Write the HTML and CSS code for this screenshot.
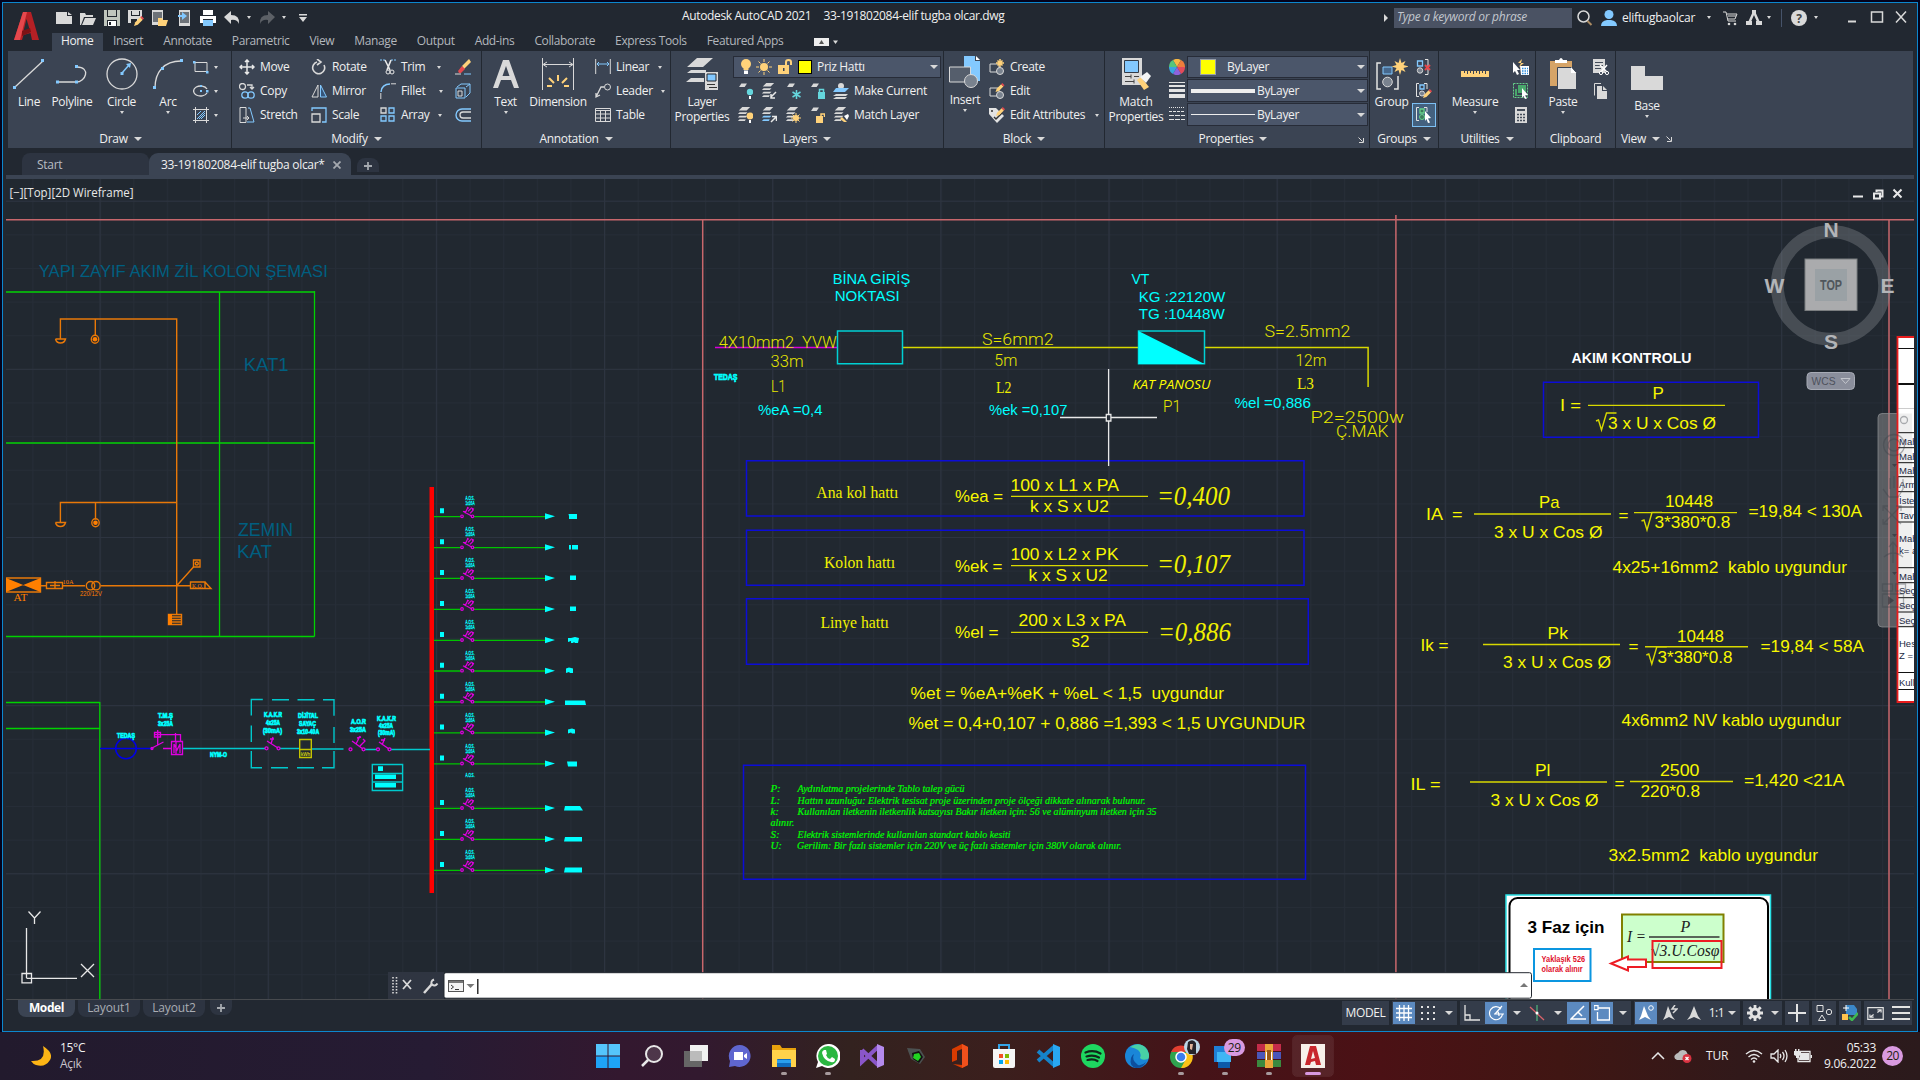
FILE: index.html
```html
<!DOCTYPE html>
<html lang="tr">
<head>
<meta charset="utf-8">
<title>Autodesk AutoCAD 2021</title>
<link rel="stylesheet" href="styles.css">
</head>
<body>
<svg class="defs" aria-hidden="true">
  <symbol id="layer" viewBox="0 0 16 16"><path fill="#d9d9d9" d="M5 1h10l-4 6H1z"/></symbol>
  <symbol id="stack" viewBox="0 0 16 16"><path fill="#d9d9d9" d="M6 0h9l-4 4H2zM3 6h9l-2 2H1zM3 10h9l-2 2H1zM3 14h7l-1 2H1z"/></symbol>
  <symbol id="bluestack" viewBox="0 0 16 16"><path fill="#d9d9d9" d="M6 0h8l-4 4H2zM3 6h9l-2 2H1z"/><path fill="#83c9ff" d="M3 10h9l-2 2H1zM3 14h7l-1 2H1z"/></symbol>
  <symbol id="pencil" viewBox="0 0 8 8"><path fill="#ffd27a" d="M0 8l1-3 4-4 2 2-4 4z"/><path fill="#e5484d" d="M5 1l1-1 2 2-1 1z"/></symbol>
  <symbol id="launch" viewBox="0 0 6 6"><path fill="none" stroke="#d9d9d9" d="M.5.5l4 4M5.500 1v4.500h-4.500"/></symbol>
</svg>
<div class="window">
  <header class="head">
    <svg class="logo" viewBox="0 0 26 30"><path fill="#b52025" d="M9 1h8l8 28h-7l-1.500-7-7 2L8 29H0z"/><path fill="#e5484d" d="M9 1h4L6 29H0z"/><path fill="#262b33" d="M12.500 8l3 10-6 2z"/><path fill="#7d1215" d="M8 20l8-3 1 4-9 4z"/></svg>
    <div class="titlebar">
      <div class="quick">
        <svg class="i16" viewBox="0 0 16 16"><path fill="#d9d9d9" d="M0 2h11v4h5v8H0zM12 2l4 3h-4z"/></svg>
        <svg class="i16" viewBox="0 0 16 16"><path fill="#d9d9d9" d="M0 3h5l1 2h7v2H4L1 15H0zM5 8h11l-3 7H2z"/></svg>
        <svg class="i16" viewBox="0 0 16 16"><path fill="#bfc5bd" d="M0 0h16v16H0z"/><path fill="#20252d" d="M3 0h1v6h8V0h1v7H3zM3 10h10v6H3z"/><path fill="#fff" d="M4 11h8v5H4z"/><path fill="#20252d" d="M5 12h2v3H5z"/></svg>
        <svg class="i16" viewBox="0 0 16 16"><path fill="#d9d9d9" d="M0 0h14v8l-5 5H0z"/><path fill="#20252d" d="M3 1h1v4h7V1h1v5H3zM3 9h6v4H3z"/><use href="#pencil" x="6" y="6" width="10" height="10"/></svg>
        <svg class="i16" viewBox="0 0 16 16"><path fill="#d9d9d9" d="M0 0h11v15H0z"/><path fill="#6d7278" d="M1 2h9v10H1z"/><path fill="#ffd27a" d="M6 8h4l1 2h5l-2 6H6z"/></svg>
        <svg class="i12" viewBox="0 0 12 16"><path fill="#d9d9d9" d="M1 0h11v16H1z"/><path fill="#6d7278" d="M2 2h9v11H2z"/><path fill="#83c9ff" d="M0 5h4V2l5 4-5 4V7H0z"/></svg>
        <svg class="i16 print" viewBox="0 0 16 16"><path fill="#fff" d="M3 0h10v5H3zM0 6h16v7h-3V9H3v4H0z"/><path fill="#83c9ff" d="M3 10h10v6H3z"/></svg>
        <svg class="i16" viewBox="0 0 16 16"><path fill="#d9d9d9" d="M0 7l7-6v4q9 0 8 9-2-5-8-4v4z"/></svg>
        <i class="car c1"></i>
        <svg class="i16" viewBox="0 0 16 16"><path fill="#5c6066" d="M16 7L9 1v4Q0 5 1 14q2-5 8-4v4z"/></svg>
        <i class="car c2"></i>
        <svg class="i8 c3" viewBox="0 0 8 8"><path fill="#d9d9d9" d="M0 0h8v1.500H0zM0 3h8L4 8z"/></svg>
      </div>
      <div class="doc"><span>Autodesk AutoCAD 2021</span><span>33-191802084-elif tugba olcar.dwg</span></div>
      <div class="info">
        <svg class="tri" viewBox="0 0 4 8"><path fill="#d9d9d9" d="M0 0l4 4-4 4z"/></svg>
        <div class="search">Type a keyword or phrase</div>
        <svg class="i16 mg" viewBox="0 0 16 16"><circle cx="6.500" cy="6.500" r="5.500" fill="none" stroke="#d9d9d9" stroke-width="1.500"/><path stroke="#ab8b62" stroke-width="2" d="M10.500 11l4 4"/></svg>
        <svg class="i16 usr" viewBox="0 0 16 16"><circle cx="8" cy="4.500" r="4.500" fill="#83c9ff"/><path fill="#83c9ff" d="M0 16q0-5 6-6h4q6 1 6 6z"/></svg>
        <span class="user">eliftugbaolcar</span><i class="car k1"></i>
        <svg class="i16 crt" viewBox="0 0 16 16"><path fill="none" stroke="#d9d9d9" d="M0 2h3l2 9h8M4 4h10l-2 5H5M5 6h8"/><circle cx="6" cy="14" r="1.300" fill="#d9d9d9"/><circle cx="12" cy="14" r="1.300" fill="#d9d9d9"/></svg>
        <svg class="i16 aa" viewBox="0 0 16 16"><path fill="none" stroke="#d9d9d9" stroke-width="2.500" d="M8 2L3.500 12M8 2l4.500 10"/><path fill="#d9d9d9" d="M0 11h6v4H0zM10 11h6v4h-6zM6 0h4v4H6z"/></svg>
        <i class="car k2"></i><b class="bar"></b>
        <svg class="i16 hlp" viewBox="0 0 16 16"><circle cx="8" cy="8" r="8" fill="#d9d9d9"/><text x="8" y="12.500" text-anchor="middle" class="q">?</text></svg>
        <i class="car k3"></i>
        <svg class="win" viewBox="0 0 60 14"><path fill="none" stroke="#d9d9d9" stroke-width="2" d="M0 11.500h8"/><path fill="none" stroke="#d9d9d9" stroke-width="1.500" d="M23.500 2h11v10h-11zM48 1.500l10 11M58 1.500l-10 11"/></svg>
      </div>
    </div>
    <nav class="menu">
      <a class="on">Home</a><a>Insert</a><a>Annotate</a><a>Parametric</a><a>View</a><a>Manage</a><a>Output</a><a>Add-ins</a><a>Collaborate</a><a>Express Tools</a><a>Featured Apps</a>
      <svg class="mini" viewBox="0 0 26 8"><path fill="#eee" d="M0 0h15v8H0z"/><path fill="#555" d="M5 6l2.500-4L10 6z"/><path fill="#d9d9d9" d="M19 2.500h5L21.500 6z"/></svg>
    </nav>
  </header>

  <section class="ribbon">
    <div class="panel draw">
      <div class="body">
        <div class="big w42"><svg viewBox="0 0 32 32"><path stroke="#d9d9d9" stroke-width="1.300" d="M2 29L30 3"/><path fill="#83c9ff" d="M0 28h3v3H0zM28 1h3v3h-3z"/></svg><span>Line</span></div>
        <div class="big w44"><svg viewBox="0 0 32 32"><path fill="none" stroke="#d9d9d9" stroke-width="1.300" d="M2 24h18c10 0 15-15 1-15"/><path fill="#83c9ff" d="M0 22.500h3v3H0zM19 22.500h3v3h-3zM19 7h3v3h-3z"/></svg><span>Polyline</span></div>
        <div class="big w55"><svg viewBox="0 0 32 32"><circle cx="16" cy="16" r="15" fill="none" stroke="#d9d9d9" stroke-width="1.300"/><path stroke="#83c9ff" stroke-width="1.500" d="M16 15l7-8"/><path fill="#83c9ff" d="M14.500 14h3v3h-3zM25 5l-5 1 4 4z"/></svg><span>Circle</span><i class="car"></i></div>
        <div class="big w38"><svg viewBox="0 0 32 32"><path fill="none" stroke="#d9d9d9" stroke-width="1.300" d="M3 30C3 14 12 3 29 3"/><path fill="#83c9ff" d="M1 28h3v3H1zM28 1h3v3h-3zM9 9h3v3H9z"/></svg><span>Arc</span><i class="car"></i></div>
        <div class="col dcol">
          <div class="t"><svg class="i16" viewBox="0 0 16 16"><path fill="none" stroke="#d9d9d9" d="M2 3.500h12v9H2z"/><path fill="#83c9ff" d="M0 2h2.500v2.500H0zM13 12h2.500v2.500H13z"/></svg><i class="car"></i></div>
          <div class="t"><svg class="i16" viewBox="0 0 16 16"><path fill="none" stroke="#d9d9d9" stroke-width="1.300" d="M14 6a7 5 0 1 0 0 4"/><path fill="#83c9ff" d="M7 7h2v2H7zM13 7h2.500v2.500H13zM7 2h2v2H7z"/></svg><i class="car"></i></div>
          <div class="t"><svg class="i16" viewBox="0 0 16 16"><path fill="none" stroke="#d9d9d9" d="M0 2.500h16M0 13.500h16M2.500 0v16M13.500 0v16"/><path stroke="#83c9ff" d="M4 8l4-4M4 12l8-8M8 12l4-4M6 12l6-6"/></svg><i class="car"></i></div>
        </div>
      </div>
      <div class="name">Draw<i class="dn"></i></div>
    </div>
    <div class="panel modify">
      <div class="body">
        <div class="col m1">
          <div class="t"><svg class="i16" viewBox="0 0 16 16"><path fill="none" stroke="#e8e8e8" stroke-width="1.500" d="M8 1v14M1 8h14M6 3l2-2 2 2M6 13l2 2 2-2M3 6L1 8l2 2M13 6l2 2-2 2"/></svg>Move</div>
          <div class="t"><svg class="i16" viewBox="0 0 16 16"><g fill="none" stroke-width="1.300"><circle cx="3.500" cy="3.500" r="3" stroke="#d9d9d9"/><path stroke="#d9d9d9" d="M8 2h5v3M11 4l2 2 2-2"/><circle cx="6" cy="12" r="3.200" stroke="#83c9ff"/><circle cx="12" cy="12" r="3.200" stroke="#83c9ff"/></g></svg>Copy</div>
          <div class="t"><svg class="i16" viewBox="0 0 16 16"><path fill="none" stroke="#d9d9d9" d="M1 .5h6v15H1zM4 11h6M8 9l2 2-2 2"/><path fill="none" stroke="#83c9ff" d="M9 1h2l4 14H8"/></svg>Stretch</div>
        </div>
        <div class="col m2">
          <div class="t"><svg class="i16" viewBox="0 0 16 16"><path fill="none" stroke="#d9d9d9" stroke-width="1.600" d="M6 3a6 6 0 1 0 7 3M6 0l4 3-4 3"/></svg>Rotate</div>
          <div class="t"><svg class="i16" viewBox="0 0 16 16"><path fill="none" stroke="#d9d9d9" d="M7 2v12H1z"/><path fill="#35557a" stroke="#83c9ff" d="M9.500 2v12h6z"/></svg>Mirror</div>
          <div class="t"><svg class="i16" viewBox="0 0 16 16"><path fill="none" stroke="#83c9ff" stroke-width="1.300" d="M1 4V1h14v14h-4"/><path fill="none" stroke="#d9d9d9" stroke-width="1.300" d="M1 7h8v8H1z"/></svg>Scale</div>
        </div>
        <div class="col m3">
          <div class="t"><svg class="i16" viewBox="0 0 16 16"><path stroke="#83c9ff" stroke-dasharray="2 1" d="M0 1h6M11 1h5"/><path fill="none" stroke="#e8e8e8" stroke-width="1.600" d="M5 1l5 10M11 1L7 11"/><circle cx="12" cy="13" r="2" fill="none" stroke="#e8e8e8"/><circle cx="8" cy="13" r="2" fill="none" stroke="#e8e8e8"/></svg>Trim<i class="car tr"></i></div>
          <div class="t"><svg class="i16" viewBox="0 0 16 16"><path fill="none" stroke="#83c9ff" stroke-width="1.500" d="M1 9c0-5 4-8 9-8"/><path stroke="#d9d9d9" d="M11 .8h5M.8 10v6"/></svg>Fillet<i class="car fi"></i></div>
          <div class="t"><svg class="i16" viewBox="0 0 16 16"><g fill="none" stroke-width="1.300"><path stroke="#d9d9d9" d="M1 1h5v5H1z"/><path stroke="#83c9ff" d="M9 1h5v5H9zM1 9h5v5H1zM9 9h5v5H9z"/></g></svg>Array<i class="car ar2"></i></div>
        </div>
        <div class="col m4">
          <div class="t"><svg class="i16" viewBox="0 0 16 16"><path fill="#ffd27a" d="M7 7l7-7 2 3-7 7z"/><path fill="#e5484d" d="M3 12l4-5 3 3-4 4H4z"/><path stroke="#83c9ff" d="M9 15h7"/><path stroke="#d9d9d9" d="M0 15h6"/></svg></div>
          <div class="t"><svg class="i16" viewBox="0 0 16 16"><path fill="none" stroke="#d9d9d9" d="M3 8h4v5H3z"/><path fill="none" stroke="#83c9ff" d="M1 5h9v10H1zM2 4l4-3h9v9l-4 4M11 4l4-3"/></svg></div>
          <div class="t"><svg class="i16" viewBox="0 0 16 16"><path fill="none" stroke="#83c9ff" stroke-width="1.400" d="M16 2H7a6 6 0 0 0 0 12h9"/><path fill="none" stroke="#d9d9d9" stroke-width="1.300" d="M16 5H8a3 3 0 0 0 0 6h8"/></svg></div>
        </div>
      </div>
      <div class="name">Modify<i class="dn"></i></div>
    </div>
    <div class="panel anno">
      <div class="body">
        <div class="big w47"><svg viewBox="0 0 32 32"><path fill="#d9d9d9" fill-rule="evenodd" d="M13 2h6l10 28h-5l-3-8H11l-3 8H3zM12.500 18h7L16 8z"/></svg><span>Text</span><i class="car"></i></div>
        <div class="big w58"><svg viewBox="0 0 32 32"><path fill="none" stroke="#d9d9d9" d="M.5 0v32M31.500 0v32M2 6.500h28M5 4L1 6.500 5 9M27 4l4 2.500L27 9"/><path stroke="#ffd27a" stroke-width="2" d="M5 28h5M7 20l5 5M16 17v6M25 20l-5 5M27 28h-5"/></svg><span>Dimension</span></div>
        <div class="col an1">
          <div class="t"><svg class="i16" viewBox="0 0 16 16"><path fill="none" stroke="#d9d9d9" d="M.7 0v15M15.300 0v15"/><path fill="none" stroke="#83c9ff" d="M2 5h12M4 3L2 5l2 2M12 3l2 2-2 2"/></svg>Linear<i class="car li"></i></div>
          <div class="t"><svg class="i16" viewBox="0 0 16 16"><circle cx="12.500" cy="4" r="3" fill="none" stroke="#d9d9d9"/><path fill="none" stroke="#d9d9d9" stroke-width="1.300" d="M9 4H6L1 14M1 10v4l4-2"/></svg>Leader<i class="car le"></i></div>
          <div class="t"><svg class="i16" viewBox="0 0 16 16"><path fill="none" stroke="#d9d9d9" d="M.5 1.500h15v13H.5zM.5 3.500h15M.5 7h15M.5 11h15M5.500 4v11M10.500 4v11"/></svg>Table</div>
        </div>
      </div>
      <div class="name">Annotation<i class="dn"></i></div>
    </div>
    <div class="panel layers">
      <div class="body">
        <div class="big w63"><svg viewBox="0 0 32 32"><path fill="#d9d9d9" d="M11 0h16L17 9H1zM5 12h15v3H1zM5 20h13v4H0zM19 14h13v18H19z"/><path fill="#83c9ff" stroke="#20252d" d="M21 16h9v7h-9z"/><path stroke="#333" d="M21 26.500h8M23 29.500h8"/></svg><span>Layer<br>Properties</span></div>
        <div class="lcol">
          <div class="combo wide"><svg class="i16" viewBox="0 0 16 16"><circle cx="6" cy="5" r="5" fill="#ffd27a"/><path fill="#ffd27a" d="M3.500 8h5v3h-5z"/><path fill="#fff" d="M4 11.500h4V15H4z"/></svg><svg class="i16" viewBox="0 0 16 16"><circle cx="8" cy="8" r="4" fill="#ffd27a"/><path stroke="#ffd27a" d="M8 0v3M8 13v3M0 8h3M13 8h3M2.500 2.500l2 2M11.500 11.500l2 2M2.500 13.500l2-2M11.500 4.500l2-2"/></svg><svg class="i16 lk" viewBox="0 0 16 16"><path fill="#ffd27a" d="M1 6h11v9H1z"/><path fill="none" stroke="#ffd27a" stroke-width="2" d="M9 6V3q0-2 2.500-2T14 3v3"/><path fill="#3b4453" d="M6 9h1.500v3H6z"/></svg><b class="sw"></b><span>Priz Hattı</span><i class="dn"></i></div>
          <div class="t icons"><svg class="i16" viewBox="0 0 16 16"><use href="#layer" width="12" height="9"/><circle cx="13" cy="9" r="3.200" fill="#65d6dd"/><path fill="#fff" d="M12 13h2v3h-2z"/></svg><svg class="i16" viewBox="0 0 16 16"><use href="#stack" width="14" height="14"/><path stroke="#e8e8e8" stroke-width="1.500" d="M15 9l-5 5M10 11v4h4" fill="none"/></svg><svg class="i16" viewBox="0 0 16 16"><use href="#layer" width="12" height="9"/><path stroke="#65d6dd" stroke-width="1.500" d="M11.500 7v9M7.500 9l8 5M15.500 9l-8 5"/></svg><svg class="i16" viewBox="0 0 16 16"><use href="#layer" width="12" height="9"/><path fill="#65d6dd" d="M9 9h7v7H9z"/><path fill="none" stroke="#65d6dd" stroke-width="1.500" d="M10.500 9V6.500h4V9"/></svg><svg class="i16" viewBox="0 0 16 16"><circle cx="8" cy="3" r="3" fill="#d9d9d9"/><path fill="#83c9ff" d="M3 5h13l-4 4H0z"/><path fill="#d9d9d9" d="M3 11h12l-2 2H0zM3 14h11l-2 2H0z"/></svg><span>Make Current</span></div>
          <div class="t icons"><svg class="i16" viewBox="0 0 16 16"><use href="#stack" width="14" height="14"/><circle cx="13" cy="9" r="3.400" fill="#ffd27a"/><path fill="#fff" d="M12 13h2v3h-2z"/></svg><svg class="i16" viewBox="0 0 16 16"><use href="#bluestack" width="14" height="14"/><path stroke="#e8e8e8" stroke-width="1.500" d="M10 15l5-5M11 9.500h4.500V14" fill="none"/></svg><svg class="i16" viewBox="0 0 16 16"><use href="#stack" width="14" height="14"/><circle cx="11" cy="11" r="3" fill="#ffd27a"/><path stroke="#ffd27a" d="M11 6v10M6 11h10M7.500 7.500l7 7M14.500 7.500l-7 7"/></svg><svg class="i16" viewBox="0 0 16 16"><use href="#layer" width="12" height="9"/><path fill="#ffd27a" d="M7 9h7v7H7z"/><path fill="none" stroke="#ffd27a" stroke-width="1.500" d="M12 9V7h3.500v3"/></svg><svg class="i16" viewBox="0 0 16 16"><use href="#stack" width="14" height="14"/><path fill="#ffd27a" d="M9 10l5 5h-3l-4-3z"/><path fill="#fff" d="M11 9l4-2 1 2-2 4z"/></svg><span>Match Layer</span></div>
        </div>
      </div>
      <div class="name">Layers<i class="dn"></i></div>
    </div>
    <div class="panel block">
      <div class="body">
        <div class="big w43 ins"><svg viewBox="0 0 32 32"><path fill="#83c9ff" d="M15 0h11v5h5v20H15z"/><path fill="#fff" d="M27 0l4 4h-4z"/><path fill="#555e6c" stroke="#d9d9d9" d="M.5 11h21v15H.5z"/><circle cx="22" cy="25" r="6.500" fill="#79828e" stroke="#d9d9d9"/></svg><span>Insert</span><i class="car"></i></div>
        <div class="col bl">
          <div class="t"><svg class="i16" viewBox="0 0 16 16"><path fill="none" stroke="#d9d9d9" d="M1 5h9v8H1z"/><circle cx="11" cy="12" r="3.500" fill="#79828e" stroke="#d9d9d9"/><path stroke="#ffd27a" stroke-width="1.500" d="M11 0v8M7 4h8M8.500 1.500l5 5M13.500 1.500l-5 5"/></svg>Create</div>
          <div class="t"><svg class="i16" viewBox="0 0 16 16"><path fill="none" stroke="#d9d9d9" d="M1 5h9v8H1z"/><circle cx="11" cy="12" r="3.500" fill="#79828e" stroke="#d9d9d9"/><use href="#pencil" x="6" y="0" width="10" height="9"/></svg>Edit</div>
          <div class="t"><svg class="i16" viewBox="0 0 16 16"><path fill="#e3e3e3" d="M0 1h7l8 8-7 7-8-9z"/><circle cx="3" cy="4" r="1" fill="#333"/><path stroke="#333" stroke-width="1.500" d="M5 10l2 2 6-6" fill="none"/><use href="#pencil" x="7" y="0" width="9" height="9"/></svg>Edit Attributes<i class="car ea"></i></div>
        </div>
      </div>
      <div class="name">Block<i class="dn"></i></div>
    </div>
    <div class="panel props">
      <div class="body">
        <div class="big w62"><svg viewBox="0 0 32 32"><path fill="#d9d9d9" d="M2 0h20v27H2z"/><path fill="#83c9ff" stroke="#333b47" d="M4.500 2.500h14v12h-14z"/><path stroke="#444" d="M5 18.500h6M5 23.500h9M11 16.500v4M14 21.500v4M14 18.500h5"/><path fill="#ffd27a" d="M17 22l4-3 8 10-5 3z"/><path fill="#f4f4f4" d="M20 19l7-5 4 4-5 7z"/></svg><span>Match<br>Properties</span></div>
        <div class="col pi">
          <div class="t"><svg class="i16" viewBox="0 0 16 16"><path fill="#f6b844" d="M8 8L4 1a8 8 0 0 1 8 0z"/><path fill="#ef7d3c" d="M8 8l4-7a8 8 0 0 1 4 7z"/><path fill="#e24b5b" d="M8 8h8a8 8 0 0 1-4 7z"/><path fill="#8e63dd" d="M8 8l4 7a8 8 0 0 1-8 0z"/><path fill="#3aa4e0" d="M8 8l-4 7a8 8 0 0 1-4-7z"/><path fill="#55c67b" d="M8 8H0a8 8 0 0 1 4-7z"/></svg></div>
          <div class="t"><svg class="i16" viewBox="0 0 16 16"><path fill="#e3e3e3" d="M0 0h16v1H0zM0 3h16v2H0zM0 7h16v3H0zM0 12h16v4H0z"/></svg></div>
          <div class="t"><svg class="i16" viewBox="0 0 16 16"><path stroke="#e3e3e3" stroke-dasharray="1 1" d="M0 1.500h16"/><path stroke="#e3e3e3" stroke-dasharray="3 1" d="M0 5.500h16"/><path stroke="#e3e3e3" stroke-dasharray="5 1" d="M0 9.500h16M0 13.500h16"/></svg></div>
        </div>
        <div class="pcombos">
          <div class="combo"><b class="sw y"></b><span>ByLayer</span><i class="dn"></i></div>
          <div class="combo"><b class="ln thick"></b><span>ByLayer</span><i class="dn"></i></div>
          <div class="combo"><b class="ln"></b><span>ByLayer</span><i class="dn"></i></div>
        </div>
      </div>
      <div class="name">Properties<i class="dn"></i><svg class="la" viewBox="0 0 6 6"><use href="#launch"/></svg></div>
    </div>
    <div class="panel groups">
      <div class="body">
        <div class="big w42g"><svg viewBox="0 0 32 32"><path fill="none" stroke="#e3e3e3" stroke-width="1.500" d="M5 5H1v26h4M18 31h4V18"/><path fill="#46688d" stroke="#83c9ff" d="M7 9h9v7H7z"/><circle cx="11.500" cy="24" r="4.800" fill="#79828e" stroke="#d9d9d9"/><path fill="#ffd27a" d="M24 0l1.500 5 4-2-2 4 5 1.500-5 1.500 2 4-4-2-1.500 5-1.500-5-4 2 2-4-5-1.500 5-1.500-2-4 4 2z"/></svg><span>Group</span></div>
        <div class="col gi">
          <div class="t"><svg class="i16" viewBox="0 0 16 16"><path fill="none" stroke="#e3e3e3" d="M9 .5h3v15H9"/><path fill="none" stroke="#83c9ff" stroke-width="1.300" d="M1.500 2h5v5h-5z"/><circle cx="4" cy="11.500" r="2.700" fill="#79828e" stroke="#d9d9d9"/><path stroke="#e5484d" stroke-width="2" d="M9 6l5 5M14 6l-5 5"/></svg></div>
          <div class="t"><svg class="i16" viewBox="0 0 16 16"><path fill="none" stroke="#e3e3e3" d="M3 .5H.5v13H3M8 .5h3V6"/><path fill="none" stroke="#83c9ff" stroke-width="1.300" d="M4 2h4v4H4z"/><circle cx="6" cy="10.500" r="2.500" fill="#79828e" stroke="#d9d9d9"/><use href="#pencil" x="7" y="6" width="9" height="9"/></svg></div>
          <div class="t hot"><svg class="i16" viewBox="0 0 16 16"><path fill="none" stroke="#e3e3e3" d="M3 .5H.5v13H3M8 .5h3V5"/><path fill="#3c7a5c" stroke="#67d18a" stroke-width="1.300" d="M4 2h4v4H4z"/><circle cx="6" cy="10" r="2.500" fill="#3c7a5c" stroke="#67d18a"/><path fill="#fff" d="M9 4l6 7-3 .5 2 4-2 .5-1.500-4L9 14z"/></svg></div>
        </div>
      </div>
      <div class="name">Groups<i class="dn"></i></div>
    </div>
    <div class="panel utils">
      <div class="body">
        <div class="big w72"><svg viewBox="0 0 32 32"><path fill="#ffd27a" d="M2 13h28v6H2z"/><path stroke="#3b4453" d="M5.500 13v2M8.500 13v3M11.500 13v2M14.500 13v3M17.500 13v2M20.500 13v3M23.500 13v2M26.500 13v3"/></svg><span>Measure</span><i class="car"></i></div>
        <div class="col uc">
          <div class="t"><svg class="i16" viewBox="0 0 16 16"><path fill="#fff" d="M0 3l7 8H4l2 4-2 1-2-4-2 2z"/><path fill="#fff" d="M7 7h9v9H8z"/><path stroke="#2c8cdc" stroke-width="1.500" stroke-dasharray="1.500 1" d="M9 9.500h6M9 12h6M9 14.500h6"/><path fill="#ffd27a" d="M9 0L5 4h3L6 8l5-4H8z"/></svg></div>
          <div class="t"><svg class="i16" viewBox="0 0 16 16"><path fill="none" stroke="#67d18a" stroke-dasharray="2 1" d="M.5.500h14v14H.5z"/><path fill="#49a86c" d="M2 6h2v6h6v1H2zM5 2h8v8H5z"/><path fill="#fff" d="M9 5l6 7-3 .5 2 3-2 .5-1.500-3L9 15z"/></svg></div>
          <div class="t"><svg class="i16" viewBox="0 0 16 16"><path fill="#d9d9d9" d="M2 0h12v16H2z"/><path fill="#434c59" d="M4 2h8v2H4z"/><path stroke="#434c59" stroke-width="1.500" stroke-dasharray="2 1" d="M4 7.500h8M4 10.500h8M4 13.500h8"/></svg></div>
        </div>
      </div>
      <div class="name">Utilities<i class="dn"></i></div>
    </div>
    <div class="panel clip">
      <div class="body">
        <div class="big w54"><svg viewBox="0 0 32 32"><path fill="#d6a467" d="M3 3h22v25H3z"/><path fill="#fff" d="M8 5V2h4q2-4 4 0h4v3z"/><path fill="#d9d9d9" stroke="#3b4453" d="M10.500 9.500h14l5 5v17h-19z"/><path fill="#fff" d="M24 9l5 6h-5z"/></svg><span>Paste</span><i class="car"></i></div>
        <div class="col ci">
          <div class="t"><svg class="i16" viewBox="0 0 16 16"><path fill="#d9d9d9" d="M0 0h12v14H0z"/><path stroke="#434c59" d="M2 3.500h8M2 6.500h8M2 9.500h6"/><path stroke="#fff" stroke-width="1.400" d="M7 6l7 7M14 6l-6 7"/><circle cx="8" cy="14" r="1.600" fill="#3b4453" stroke="#fff"/><circle cx="14" cy="14" r="1.600" fill="#3b4453" stroke="#fff"/></svg></div>
          <div class="t"><svg class="i16" viewBox="0 0 16 16"><path fill="none" stroke="#d9d9d9" d="M1.500.5H8M1.500.5v12"/><path fill="#d9d9d9" d="M4 3h6l4 4v9H4z"/><path fill="#3b4453" d="M9 3v5h5V7h-4V3z"/></svg></div>
        </div>
      </div>
      <div class="name">Clipboard</div>
    </div>
    <div class="panel view">
      <div class="body">
        <div class="big w62 base"><svg viewBox="0 0 32 32"><path fill="#d9d9d9" d="M0 4h14v10h18v14H0z"/></svg><span>Base</span><i class="car"></i></div>
      </div>
      <div class="name">View<i class="dn"></i><svg class="la v" viewBox="0 0 6 6"><use href="#launch"/></svg></div>
    </div>
  </section>

  <div class="files">
    <div class="ft start">Start</div>
    <div class="ft cur">33-191802084-elif tugba olcar*<svg viewBox="0 0 8 8"><path stroke="#a5a9af" stroke-width="1.800" d="M.5.5l7 7M7.500.5l-7 7"/></svg></div>
    <div class="ft add"><svg viewBox="0 0 8 8"><path stroke="#a5a9af" stroke-width="1.800" d="M0 4h8M4 0v8"/></svg></div>
  </div>

  <svg class="canvas" viewBox="6 179 1908 820">
    <defs>
      <pattern id="minor" patternUnits="userSpaceOnUse" x="99.600" y="200.700" width="33.630" height="33.630"><path d="M0 .5h34M.5 0v34" stroke="#262d37" fill="none"/></pattern>
      <pattern id="major" patternUnits="userSpaceOnUse" x="99.600" y="200.700" width="168.150" height="168.150"><path d="M0 .5h169M.5 0v169" stroke="#2d3440" stroke-width="1.200" fill="none"/></pattern>
      <g id="sw"><g fill="none" stroke="#e000e0" stroke-width="1.200"><circle cx="462" cy="0" r="1.300"/><circle cx="472.500" cy="0" r="1.300"/><path d="M463-5l9 5M465-3l3-6M467-9l2 1M464-4l2-1M470-3l3-3-1-2 2 1M468-5l3-3"/></g></g>
      <g id="branch"><path d="M434 .3h26M474 .3h71" stroke="#00c400" stroke-width="1.300"/><use href="#sw"/><path fill="#0ff" d="M545-3l10 3-10 3.300zM440-8h4v5h-4z"/><text class="tiny" x="465.500" y="-16" textLength="9" lengthAdjust="spacingAndGlyphs">A.O.S.</text><text class="tiny" x="465.500" y="-11" textLength="9" lengthAdjust="spacingAndGlyphs">1x16A</text></g>
    </defs>
    <rect x="6" y="179" width="1908" height="820" fill="#212830"/>
    <rect x="6" y="179" width="1908" height="820" fill="url(#minor)"/>
    <rect x="6" y="179" width="1908" height="820" fill="url(#major)"/>
    <text class="ui" x="9.500" y="197" textLength="124" lengthAdjust="spacingAndGlyphs">[−][Top][2D Wireframe]</text>
    <g fill="none" stroke="#e8e8e8" stroke-width="2"><path d="M1853 196.500h10M1874 193.500h6v5h-6zM1876.500 192v-1.500h6v6h-1.500"/><path d="M1893.500 189.500l8 8M1901.500 189.500l-8 8"/></g>
    <g fill="none" stroke="#c8676c" stroke-width="1.500"><path d="M6 219.700h1908M702.700 219v780M1395.900 215v784M1889 219v780"/></g>

    <!-- weak-current riser -->
    <g class="teal"><text x="38.800" y="277.300" font-size="17" textLength="289" lengthAdjust="spacingAndGlyphs">YAPI ZAYIF AKIM ZİL KOLON ŞEMASI</text><text x="243.700" y="371" font-size="18" textLength="45" lengthAdjust="spacingAndGlyphs">KAT1</text><text x="238" y="536" font-size="18" textLength="55" lengthAdjust="spacingAndGlyphs">ZEMIN</text><text x="237" y="558" font-size="18" textLength="35" lengthAdjust="spacingAndGlyphs">KAT</text></g>
    <g fill="none" stroke="#00d200"><path d="M6 292h308.500M6 443h308.500" stroke="#0aa80f" stroke-width="2"/><path d="M219.500 292v344M314.500 291v345.500M6 636.500h308.500M6 702.500h93.800M6 728.500h93.800M99.800 702v297" stroke-width="1.300"/></g>
    <g fill="none" stroke="#e87808" stroke-width="1.400"><path d="M60.400 339v-20h116.300v295M95.300 319v17M60.400 523v-20.500h116.300M95.500 502.500v17M40.500 585.700h6M63 585.700h22M101 585.700h90M176.700 585.700l17-19"/><path d="M55.500 339h10q-1 4-5 4t-5-4M55.500 522.500h10q-1 4-5 4t-5-4"/><ellipse cx="95" cy="339.300" rx="3.700" ry="4"/><ellipse cx="95.500" cy="522.700" rx="3.700" ry="4"/><path d="M6 578h34.500v14H6zM46.500 582.500h16v6h-16zM50 585.500h10M55 581v8M193.500 560h6.500v7h-6.500zM190.500 582h14.500v6.500h-14.500zM205 582l6 6.500h-6M168.500 614.500h13v10h-13zM172 617h9M172 619.500h9M172 622h9"/><circle cx="90.500" cy="585.700" r="4.200"/><circle cx="96" cy="585.700" r="4.200"/><circle cx="196.800" cy="563.500" r="1.500"/></g>
    <g fill="#ff7f00"><path d="M6 578l34.500 14v-14L6 592zM168 614h4v11h-4z"/><circle cx="95" cy="339.300" r="2.300"/><circle cx="95.500" cy="522.700" r="2.300"/></g>
    <g class="serif" fill="#ff7f00"><text x="13.500" y="601" font-size="11" textLength="14" lengthAdjust="spacingAndGlyphs">AT</text><text x="62.500" y="584" font-size="7" textLength="11" lengthAdjust="spacingAndGlyphs">10A</text><text x="80" y="595.500" font-size="7" class="sans" textLength="22" lengthAdjust="spacingAndGlyphs">220/12V</text><text x="192" y="588" font-size="6" textLength="11" lengthAdjust="spacingAndGlyphs">K.O.</text></g>

    <!-- distribution branches -->
    <use href="#branch" y="516.300"/><use href="#branch" y="547.300"/><use href="#branch" y="578"/><use href="#branch" y="609"/><use href="#branch" y="640"/><use href="#branch" y="670.700"/><use href="#branch" y="701.700"/><use href="#branch" y="732.500"/><use href="#branch" y="763.500"/><use href="#branch" y="808"/><use href="#branch" y="839"/><use href="#branch" y="870"/>
    <text class="tiny" x="465.500" y="777" textLength="9" lengthAdjust="spacingAndGlyphs">A.O.S.</text>
    <path fill="#0ff" d="M568.500 514h8.500v5h-8v-3zM569 545h2v4.500h-2zM572 545h6v4.500h-6zM570 575.500h6v4.500h-6zM570 606.500h6v4.500h-6zM568 638h3l4-1 4 1-1 5h-3l-1-1-1 1h-2v-2l-3 1zM566 668.500l3-1 4 1v4.500h-3l-1-1-3 1zM565 700.500h20l1 4.500h-21zM568 729.500l4-1 3 1v4h-3l-1-1-3 1zM567 761.500h10v5h-9zM565 806h15l3 4.500h-19zM565 837h17v4.500h-18zM565 867.500h17v5h-18z"/>
    <rect x="429.500" y="487" width="4.500" height="406" fill="#f00"/>

    <!-- supply line -->
    <g fill="none" stroke="#0000e6" stroke-width="1.500"><path d="M100 748.500h52"/><circle cx="126" cy="748.500" r="10.300"/></g>
    <g fill="none" stroke="#00c8cc" stroke-width="1.400"><path d="M183 748.500h82M280 748.500h20M312 749h31.500M365 749.500h11M391 749.500h39"/><path d="M251.300 715.500v-16h11.500M272 699.700h17M297.500 699.700h17M323 699.700h11v16M334 727v16M334 751v16.800h-12M314 767.800h-17M288 767.800h-17M262 767.800h-10.700V751M251.300 742v-16.500M372.300 764.500h30.300v26h-30.300zM372 773.500h30M372 782h30"/></g>
    <g fill="none" stroke="#e000e0" stroke-width="1.300"><circle cx="152" cy="748.500" r="1"/><path d="M152 748l11.500-6M157.700 730v16M154.500 732.500h6v4.500h-6zM154.500 734.700h26v7M175.500 733v8M163 748.500h9M171.500 741.500h11v13h-11zM174 753v-9l3 6 3-6v9M176 741v13"/><circle cx="266.500" cy="748.300" r="1.500"/><circle cx="278.500" cy="748.300" r="1.500"/><path d="M267 741l11 7M271 744l2-7M270 739h4"/><circle cx="350.500" cy="749.300" r="1.500"/><circle cx="363.500" cy="749.300" r="1.500"/><path d="M352 741l11 8M356 744l4-8M357 738l4-1M360 746l5-5-2-2"/><circle cx="378" cy="749.300" r="1.500"/><circle cx="389.500" cy="749.300" r="1.500"/><path d="M379 742l10 7M382 745l3-7M381 740h4"/></g>
    <g fill="none" stroke="#c4c400" stroke-width="1.400"><path d="M299.700 739.500h11.600v18h-11.600zM299.700 749.500h11.600"/></g><text x="301" y="756" font-size="6" fill="#ff0" class="sans" textLength="9" lengthAdjust="spacingAndGlyphs">kWh</text>
    <path fill="#0ff" d="M378 766.300h5v4.700h-5zM375 774.500h21v4.500h-21zM375 783h21v4.500h-21z"/>
    <g class="lab">
      <text x="117" y="737.500" textLength="18" lengthAdjust="spacingAndGlyphs">TEDAŞ</text><text x="158" y="718" textLength="15" lengthAdjust="spacingAndGlyphs">T.M.Ş</text><text x="158" y="726" textLength="15" lengthAdjust="spacingAndGlyphs">3x25A</text><text x="210" y="757" textLength="17" lengthAdjust="spacingAndGlyphs">NYM-O</text><text x="264" y="717" textLength="18" lengthAdjust="spacingAndGlyphs">K.A.K.R</text><text x="266" y="725" textLength="14" lengthAdjust="spacingAndGlyphs">4x25A</text><text x="263" y="733" textLength="19" lengthAdjust="spacingAndGlyphs">(30mA)</text><text x="298" y="718" textLength="20" lengthAdjust="spacingAndGlyphs">DİJİTAL</text><text x="299" y="726" textLength="17" lengthAdjust="spacingAndGlyphs">SAYAÇ</text><text x="297" y="734" textLength="22" lengthAdjust="spacingAndGlyphs">3x10-40A</text><text x="351" y="724" textLength="15" lengthAdjust="spacingAndGlyphs">A.O.R</text><text x="350" y="732" textLength="16" lengthAdjust="spacingAndGlyphs">3x25A</text><text x="377" y="721" textLength="19" lengthAdjust="spacingAndGlyphs">K.A.K.R</text><text x="379" y="727.500" textLength="14" lengthAdjust="spacingAndGlyphs">4x25A</text><text x="378" y="735" textLength="17" lengthAdjust="spacingAndGlyphs">(30mA)</text><text x="714" y="380" textLength="23.500" lengthAdjust="spacingAndGlyphs" font-size="9">TEDAŞ</text>
    </g>

    <!-- single-line diagram -->
    <path d="M715 347.500h122.500" stroke="#d800d8" stroke-width="1.500"/>
    <path d="M902.500 347.500h236M1204.500 347.500h163.600v39.500" stroke="#d8d800" stroke-width="1.500" fill="none"/>
    <path d="M837.500 331h65v32.700h-65zM1138.500 331h66v32.700h-66z" stroke="#00d0d4" stroke-width="1.500" fill="none"/><path d="M1138.500 331l66 33h-66z" fill="#0ff"/>
    <g class="cy">
      <text x="832.700" y="284" textLength="77.500" lengthAdjust="spacingAndGlyphs">BİNA GİRİŞ</text><text x="834.700" y="301" textLength="65" lengthAdjust="spacingAndGlyphs">NOKTASI</text><text x="1131.400" y="284" textLength="18" lengthAdjust="spacingAndGlyphs">VT</text><text x="1138.800" y="302" textLength="86.500" lengthAdjust="spacingAndGlyphs">KG :22120W</text><text x="1138.800" y="319" textLength="86" lengthAdjust="spacingAndGlyphs">TG :10448W</text><text x="758" y="415" textLength="64.500" lengthAdjust="spacingAndGlyphs">%eA =0,4</text><text x="989" y="415" textLength="78.500" lengthAdjust="spacingAndGlyphs">%ek =0,107</text><text x="1234.500" y="408" textLength="76.500" lengthAdjust="spacingAndGlyphs">%el =0,886</text>
    </g>
    <g class="cad">
      <text x="718.800" y="347.500" textLength="118" lengthAdjust="spacingAndGlyphs" xml:space="preserve">4X10mm2  YVW</text><text x="770.600" y="367.300" textLength="33" lengthAdjust="spacingAndGlyphs">33m</text><text x="771" y="391.700" textLength="15" lengthAdjust="spacingAndGlyphs">L1</text><text x="982" y="345" textLength="71.500" lengthAdjust="spacingAndGlyphs">S=6mm2</text><text x="994.300" y="366.300" textLength="23" lengthAdjust="spacingAndGlyphs">5m</text><text x="1264.500" y="337" textLength="86" lengthAdjust="spacingAndGlyphs">S=2.5mm2</text><text x="1295.500" y="366" textLength="31" lengthAdjust="spacingAndGlyphs">12m</text><text x="1163" y="411.700" font-size="17" textLength="18" lengthAdjust="spacingAndGlyphs">P1</text><text x="1310.500" y="422.700" font-size="17" textLength="93.500" lengthAdjust="spacingAndGlyphs">P2=2500w</text><text x="1336" y="437" font-size="17" textLength="52.500" lengthAdjust="spacingAndGlyphs">Ç.MAK</text>
    </g>
    <g class="serif" fill="#f0f000" font-size="16">
      <text x="995.900" y="393" textLength="15.500" lengthAdjust="spacingAndGlyphs">L2</text><text x="1297" y="388.500" textLength="17" lengthAdjust="spacingAndGlyphs">L3</text><text x="816.300" y="498" textLength="82" lengthAdjust="spacingAndGlyphs">Ana kol hattı</text><text x="824" y="568" textLength="71" lengthAdjust="spacingAndGlyphs">Kolon hattı</text><text x="820.400" y="628" textLength="68.500" lengthAdjust="spacingAndGlyphs">Linye hattı</text>
      <g font-style="italic" font-size="26.500"><text x="1157" y="504.500" textLength="73" lengthAdjust="spacingAndGlyphs">=0,400</text><text x="1157" y="573" textLength="73" lengthAdjust="spacingAndGlyphs">=0,107</text><text x="1158" y="640.500" textLength="73" lengthAdjust="spacingAndGlyphs">=0,886</text></g>
    </g>
    <text x="1132.500" y="388.700" class="kp" textLength="78" lengthAdjust="spacingAndGlyphs">KAT PANOSU</text>
    <g fill="none" stroke="#0c0cd8" stroke-width="1.500"><path d="M746.500 460.700h557.500V516H746.500zM746.500 530.300h557.500v55H746.500zM746.500 598.700h561.800v65.600H746.500zM743.500 765.300h562v114h-562zM1543.500 382.300h215v55h-215z"/></g>
    <path fill="none" stroke="#d8d800" stroke-width="1.400" d="M1011 496.400h137M1011 565.600h137M1011 632.400h137M1588 405.400h137M1474 514h137M1634 512.600h103M1483 644.500h137M1645 646.700h103M1470 782h137M1630 781.500h103M1596 421l2.500-1 3 10 5-17h10M1641.500 521l2.500-1 3 10 5-17.500h10M1646.300 655l2.500-1 3 10 5-17h10"/>
    <g class="ar">
      <text x="955" y="502" textLength="48" lengthAdjust="spacingAndGlyphs">%ea =</text><text x="955" y="572" textLength="47.500" lengthAdjust="spacingAndGlyphs">%ek =</text><text x="955" y="638" textLength="43.500" lengthAdjust="spacingAndGlyphs">%el =</text>
      <text x="1010.500" y="491.300" textLength="108.500" lengthAdjust="spacingAndGlyphs">100 x L1 x PA</text><text x="1030" y="512.300" textLength="79" lengthAdjust="spacingAndGlyphs">k x S x U2</text><text x="1010.500" y="560.300" textLength="108" lengthAdjust="spacingAndGlyphs">100 x L2 x PK</text><text x="1028.600" y="581" textLength="79" lengthAdjust="spacingAndGlyphs">k x S x U2</text><text x="1018.500" y="626.300" textLength="107.500" lengthAdjust="spacingAndGlyphs">200 x L3 x PA</text><text x="1071.500" y="647.300" textLength="18" lengthAdjust="spacingAndGlyphs">s2</text>
      <text x="910.500" y="698.500" textLength="313.500" lengthAdjust="spacingAndGlyphs" xml:space="preserve">%et = %eA+%eK + %eL &lt; 1,5  uygundur</text><text x="908.500" y="729" textLength="397" lengthAdjust="spacingAndGlyphs">%et = 0,4+0,107 + 0,886 =1,393 &lt; 1,5 UYGUNDUR</text>
      <text x="1560" y="410.700" textLength="21" lengthAdjust="spacingAndGlyphs">I =</text><text x="1652.500" y="399">P</text><text x="1608" y="428.700" textLength="108" lengthAdjust="spacingAndGlyphs">3 x U x Cos Ø</text>
      <text x="1426" y="520" textLength="36.500" lengthAdjust="spacingAndGlyphs" xml:space="preserve">IA  =</text><text x="1539" y="507.700" textLength="20.500" lengthAdjust="spacingAndGlyphs">Pa</text><text x="1494" y="537.700" textLength="108.500" lengthAdjust="spacingAndGlyphs">3 x U x Cos Ø</text><text x="1618.500" y="520.500">=</text><text x="1665" y="507.300" textLength="48" lengthAdjust="spacingAndGlyphs">10448</text><text x="1654.500" y="528.300" textLength="76" lengthAdjust="spacingAndGlyphs">3*380*0.8</text><text x="1748.500" y="517" textLength="113.500" lengthAdjust="spacingAndGlyphs">=19,84 &lt; 130A</text><text x="1612.500" y="573" textLength="234.500" lengthAdjust="spacingAndGlyphs" xml:space="preserve">4x25+16mm2  kablo uygundur</text>
      <text x="1420.500" y="651" textLength="28" lengthAdjust="spacingAndGlyphs">Ik =</text><text x="1547.500" y="639" textLength="20.500" lengthAdjust="spacingAndGlyphs">Pk</text><text x="1503" y="667.700" textLength="108" lengthAdjust="spacingAndGlyphs">3 x U x Cos Ø</text><text x="1628.500" y="652">=</text><text x="1677" y="642" textLength="47" lengthAdjust="spacingAndGlyphs">10448</text><text x="1657.500" y="662.700" textLength="75" lengthAdjust="spacingAndGlyphs">3*380*0.8</text><text x="1760.500" y="652" textLength="103.500" lengthAdjust="spacingAndGlyphs">=19,84 &lt; 58A</text><text x="1621.500" y="726" textLength="219.500" lengthAdjust="spacingAndGlyphs">4x6mm2 NV kablo uygundur</text>
      <text x="1410.500" y="790" textLength="30" lengthAdjust="spacingAndGlyphs">IL =</text><text x="1535" y="776" textLength="15.500" lengthAdjust="spacingAndGlyphs">Pl</text><text x="1490.500" y="806" textLength="108" lengthAdjust="spacingAndGlyphs">3 x U x Cos Ø</text><text x="1614.500" y="788.500">=</text><text x="1660" y="776" textLength="39.500" lengthAdjust="spacingAndGlyphs">2500</text><text x="1640.500" y="797" textLength="59.500" lengthAdjust="spacingAndGlyphs">220*0.8</text><text x="1744" y="786" textLength="100.500" lengthAdjust="spacingAndGlyphs">=1,420 &lt;21A</text><text x="1608.500" y="861" textLength="209.500" lengthAdjust="spacingAndGlyphs" xml:space="preserve">3x2.5mm2  kablo uygundur</text>
    </g>
    <g class="legend">
      <text x="770.400" y="792.300">P:</text><text x="797.600" y="792.300" textLength="167" lengthAdjust="spacingAndGlyphs">Aydınlatma projelerinde Tablo talep gücü</text>
      <text x="770.400" y="804.300">L:</text><text x="797.600" y="804.300" textLength="348" lengthAdjust="spacingAndGlyphs">Hattın uzunluğu: Elektrik tesisat proje üzerinden proje ölçeği dikkate alınarak bulunur.</text>
      <text x="770.400" y="815.300">k:</text><text x="797.600" y="815.300" textLength="359" lengthAdjust="spacingAndGlyphs">Kullanılan iletkenin iletkenlik katsayısı Bakır iletken için: 56 ve alüminyum iletken için 35</text>
      <text x="770.400" y="826.300" textLength="24" lengthAdjust="spacingAndGlyphs">alınır.</text>
      <text x="770.400" y="838.300">S:</text><text x="797.600" y="838.300" textLength="213" lengthAdjust="spacingAndGlyphs">Elektrik sistemlerinde kullanılan standart kablo kesiti</text>
      <text x="770.400" y="849.300">U:</text><text x="797" y="849.300" textLength="324.500" lengthAdjust="spacingAndGlyphs">Gerilim: Bir fazlı sistemler için 220V ve üç fazlı sistemler için 380V olarak alınır.</text>
    </g>
    <text class="akim" x="1571.500" y="363" textLength="120" lengthAdjust="spacingAndGlyphs">AKIM KONTROLU</text>

    <!-- cursor and UCS icon -->
    <g fill="none" stroke="#e8e8e8" stroke-width="1.300"><path d="M1108.600 369v45M1108.600 421v45M1060 417.500h46M1111 417.500h46M1106.300 414.500h4.600v6.500h-4.600z"/><path d="M26.500 928v50M26.500 978.300h50.500M22 973.500h9.500v9.300H22zM28.500 911.500l6 6.500v6M40.500 911.500l-6 6.500M81 964l13 13M94 964l-13 13"/></g>

    <!-- three-phase note -->
    <rect x="1506" y="895" width="264.500" height="110" fill="#fff" stroke="#28e0e4" stroke-width="1.500"/><rect x="1509.500" y="898" width="258.500" height="120" rx="8" fill="#fff" stroke="#000" stroke-width="2"/>
    <text class="faz" x="1527.500" y="932.700" textLength="77" lengthAdjust="spacingAndGlyphs">3 Faz için</text>
    <rect x="1534" y="949" width="56.500" height="32" fill="#fff" stroke="#0c96e0" stroke-width="2"/><g class="yak"><text x="1541.600" y="962.300" textLength="43.500" lengthAdjust="spacingAndGlyphs">Yaklaşık 526</text><text x="1541.600" y="971.800" textLength="41" lengthAdjust="spacingAndGlyphs">olarak alınır</text></g>
    <rect x="1622" y="914.500" width="101.500" height="47.500" fill="#ccffcc" stroke="#808000" stroke-width="2"/>
    <g class="serif" fill="#222" font-style="italic" font-size="16"><text x="1627" y="941.700" textLength="19" lengthAdjust="spacingAndGlyphs">I =</text><text x="1680.500" y="932">P</text><text x="1651" y="956" textLength="68.500" lengthAdjust="spacingAndGlyphs">√3.U.Cosφ</text></g>
    <path d="M1649 937h70.500" stroke="#333" stroke-width="1.300"/><path d="M1652.500 941h69v27h-69z" fill="none" stroke="#ed1c24" stroke-width="2"/><path d="M1646 959.500v7.500h-18v3.500l-17-7 17-7v3z" fill="#fff" stroke="#ed1c24" stroke-width="2"/>

    <!-- view cube and navigation bar -->
    <circle cx="1831" cy="285.500" r="53.700" fill="none" stroke="#878b90" stroke-opacity=".38" stroke-width="13"/>
    <rect x="1805" y="259" width="52" height="51.500" fill="#aaabad" stroke="#7b7e80"/><rect x="1815" y="269" width="32" height="32" fill="#9aa1a5"/>
    <g class="cube"><text x="1831" y="236.500">N</text><text x="1831" y="349">S</text><text x="1774.500" y="292.800">W</text><text x="1887.500" y="292.800">E</text><text x="1831" y="290" class="top" textLength="22" lengthAdjust="spacingAndGlyphs">TOP</text></g>
    <rect x="1807" y="372.500" width="47.500" height="17" rx="4" fill="#8a8e9b" stroke="#a7abb5"/><text class="wcs" x="1811.500" y="384.500" textLength="24" lengthAdjust="spacingAndGlyphs">WCS</text><path fill="none" stroke="#c3c6cc" d="M1841 378.500h9l-4.500 5z"/>
    <rect x="1878" y="413.500" width="34" height="213.500" rx="4" fill="#999" fill-opacity=".48" stroke="#909396" stroke-opacity=".7"/>

    <!-- table cut by the viewport edge -->
    <path fill="#fff" d="M1897 336.700h17v365.600h-17z"/><path fill="#999" fill-opacity=".16" d="M1897 413.500h15v213.500h-15z"/><path fill="none" stroke="#111" d="M1898 348.500h16M1898 432.700h16M1898 447.700h16M1898 462.700h16M1898 476.700h16M1898 491.700h16M1898 507h16M1898 522h16M1898 567.700h16M1898 582.700h16M1898 597.700h16M1898 612h16M1898 626.700h16M1898 672.500h16M1898 689.500h16"/><path stroke="#111" stroke-width="2" d="M1898 384h16"/><path stroke="#ccc" d="M1898 408.500h16"/><path fill="none" stroke="#e81c1c" stroke-width="1.800" d="M1914 337h-16.500v365h16.500"/>
    <g class="tab"><text x="1899" y="445">Mahal</text><text x="1899" y="460">Mahal</text><text x="1899" y="474">Mahal</text><text x="1899" y="488">Arma</text><text x="1899" y="504">İsten</text><text x="1899" y="519">Tavan</text><text x="1899" y="542">Mahal</text><text x="1899" y="554">k= a</text><text x="1899" y="580">Mahal</text><text x="1899" y="594">Seçil</text><text x="1899" y="609">Seçil</text><text x="1899" y="624">Seçil</text><text x="1899" y="647">Hesap</text><text x="1899" y="658.500">Z = A</text><text x="1899" y="686">Kulla</text></g>
    <g fill="none" stroke="#3f444a" stroke-opacity=".4" stroke-width="1.300"><circle cx="1904" cy="420" r="3.500"/><circle cx="1894" cy="445" r="10.500"/><circle cx="1894" cy="445" r="6"/><path d="M1883 489l6 8h9l5-8v-10M1890 489v-11M1894 488v-12M1898 488v-11M1883 506l18 18M1901 506l-18 18M1883 511v-5h5M1901 511v-5h-5M1883 519v5h5M1893 543v20M1889 547l4-5 4 5M1884 557q9-8 19 0M1882.500 584h10v7h-10zM1895.500 584h10v7h-10zM1882.500 594h21v13h-21z"/></g><path fill="#33383e" fill-opacity=".7" d="M1888 596l6 4.500-6 4.500zM1892 464h5l-2.500 3zM1892 534h5l-2.500 3zM1892 572h5l-2.500 3z"/>

    <!-- command line -->
    <path fill="#2f3541" d="M388 972h56v27h-56z"/><rect x="444" y="972.700" width="1087.500" height="25.500" rx="2" fill="#fff" stroke="#23282f"/>
    <path stroke="#d9d9d9" stroke-width="1.600" stroke-dasharray="1.500 1.500" d="M393 977v17M396.500 977v17"/><path stroke="#d9d9d9" stroke-width="1.800" d="M403 980l8 9M411 980l-8 9"/>
    <path fill="none" stroke="#d9d9d9" stroke-width="2.500" d="M424 993l8-9"/><path fill="none" stroke="#d9d9d9" stroke-width="2" d="M434 979.500q-4 2-2 5 3 2.500 5.500-1"/>
    <rect x="448.500" y="980.500" width="15" height="11" fill="#f2f2f2" stroke="#555"/><path fill="#777" d="M449 981h14v2h-14zM466.500 984h8l-4 4zM1520 987h8l-4-4z"/><path fill="none" stroke="#333" d="M451 985l2.500 2-2.500 2M455 989.500h4"/><path stroke="#111" stroke-width="1.300" d="M477.800 979v15"/>
  </svg>

  <footer class="bottom">
    <div class="layouts"><a class="on">Model</a><a>Layout1</a><a>Layout2</a><a class="plus"><svg viewBox="0 0 8 8"><path stroke="#a5a9af" stroke-width="1.800" d="M0 4h8M4 0v8"/></svg></a></div>
    <div class="status">
      <div class="g model">MODEL</div>
      <div class="g"><b class="s act"><svg viewBox="0 0 16 16"><path stroke="#fff" stroke-width="1.300" fill="none" d="M0 3.500h16M0 8h16M0 12.500h16M3.500 0v16M8 0v16M12.500 0v16"/></svg></b><b class="s dots"><svg viewBox="0 0 16 16"><path stroke="#e3e3e3" stroke-width="2" stroke-dasharray="2 4" d="M1 2h14M1 8h14M1 14h14"/></svg></b><i class="dn"></i></div>
      <div class="g"><b class="s"><svg viewBox="0 0 16 16"><path fill="none" stroke="#e3e3e3" stroke-width="1.300" d="M1 0v15h15M1 10h5v5"/></svg></b><b class="s act pol"><svg viewBox="0 0 16 16"><path fill="none" stroke="#fff" stroke-width="1.200" d="M13 4a6.500 6.500 0 1 0 1.500 5M6 9h10M7 9l7-8M9 6q2 1 2 5"/></svg></b><i class="dn"></i><b class="s"><svg viewBox="0 0 16 16"><path stroke="#4fae79" stroke-width="1.300" d="M8 0v16"/><path stroke="#d9636a" stroke-width="1.300" d="M1 2l14 13"/><circle cx="8" cy="8" r="1.500" fill="#fff"/></svg></b><i class="dn"></i><b class="s act"><svg viewBox="0 0 16 16"><path fill="none" stroke="#fff" stroke-width="1.500" d="M16 14H1L14 1M8 7l4 4"/></svg></b><b class="s act"><svg viewBox="0 0 16 16"><path fill="none" stroke="#fff" stroke-width="1.300" d="M3.500 3h12v12h-12V7M0 .6h4v4H0z"/></svg></b><i class="dn"></i></div>
      <div class="g an"><b class="s act"><svg viewBox="0 0 16 16"><path fill="#fff" d="M6 1l4 10 3 4-6-3-6 3 2-4z"/><circle cx="13" cy="3" r="2.300" fill="none" stroke="#fff"/></svg></b><b class="s"><svg viewBox="0 0 16 16"><path fill="#d9d9d9" d="M6 1l4 10 3 4-6-3-6 3 2-4z"/><path stroke="#d9d9d9" stroke-width="1.500" fill="none" d="M13 0l-3 4h5l-4 4"/></svg></b><b class="s"><svg viewBox="0 0 16 16"><path fill="#d9d9d9" d="M8 1l4 10 3 4-7-3-7 3 3-4z"/></svg></b><em>1:1</em><i class="dn"></i></div>
      <div class="g gear"><svg viewBox="0 0 16 16"><circle cx="8" cy="8" r="4" fill="none" stroke="#e3e3e3" stroke-width="3"/><path stroke="#e3e3e3" stroke-width="2.800" d="M8 0v3M8 13v3M0 8h3M13 8h3M2.300 2.300l2 2M11.700 11.700l2 2M2.300 13.700l2-2M11.700 4.300l2-2"/></svg><i class="dn"></i></div>
      <div class="g one"><svg class="big18" viewBox="0 0 18 18"><path stroke="#e3e3e3" stroke-width="2" d="M0 9h18M9 0v18"/></svg></div>
      <div class="g one"><svg viewBox="0 0 16 16"><path fill="none" stroke="#e3e3e3" d="M1 .5h6v6H1zM6 10l3.500 5.500h-7z"/><circle cx="13" cy="7" r="2.700" fill="none" stroke="#e3e3e3"/></svg></div>
      <div class="g two"><svg viewBox="0 0 16 16"><path fill="#3b87c8" d="M4 0h8l3 4v6H4z"/><path fill="none" stroke="#fff" d="M4 0v6M1 3h6"/><path fill="#ffc34d" d="M0 9h6v6H0z"/><path fill="none" stroke="#3fb950" stroke-width="2.500" d="M7 12l3 3 6-7"/></svg></div>
      <div class="g last"><svg class="fs" viewBox="0 0 18 14"><path fill="none" stroke="#e3e3e3" stroke-width="1.300" d="M.7.7h16.600v12.600H.7zM11 3h4v3M15 3l-4 3M3 8v3h4M3 11l4-3"/></svg><svg class="big18" viewBox="0 0 18 18"><path stroke="#e3e3e3" stroke-width="2" d="M0 3h18M0 9h18M0 15h18"/></svg></div>
    </div>
  </footer>
</div>

<div class="taskbar">
  <div class="weather"><svg viewBox="0 0 20 20"><path fill="#fdb515" d="M12 0q11 7 7 14-5 8-14 5-3-1-5-4 16 1 12-15z"/></svg><div>15°C<br><span>Açık</span></div></div>
  <div class="apps">
    <div class="a"><svg viewBox="0 0 24 24"><path fill="#55c5fb" d="M0 0h11.500v11.500H0zM12.500 0H24v11.500H12.500z"/><path fill="#1ea4f7" d="M0 12.500h11.500V24H0zM12.500 12.500H24V24H12.500z"/></svg></div>
    <div class="a"><svg viewBox="0 0 24 24"><circle cx="14" cy="10" r="8" fill="#ffffff22" stroke="#e8e8e8" stroke-width="2"/><path stroke="#e8e8e8" stroke-width="2.500" d="M8 16l-6 6"/></svg></div>
    <div class="a"><svg viewBox="0 0 24 24"><path fill="#666" d="M0 7h18v16H0z"/><path fill="#f1f1f1" d="M6 1h18v16H6z"/><path fill="#bbb" d="M6 7h12v10H6z"/></svg></div>
    <div class="a"><svg viewBox="0 0 24 24"><path fill="#5f66cf" d="M12 1a11 11 0 1 1-5 21l-6 1 1-6A11 11 0 0 1 12 1z"/><path fill="#fff" d="M6 8h9v8H6zM16 11l3-2v6l-3-2z"/></svg></div>
    <div class="a run"><svg viewBox="0 0 24 24"><path fill="#e8a20c" d="M0 1h8l2 3h14v5H0z"/><path fill="#ffd24a" d="M0 6h24v17H0z"/><path fill="#0f6cbd" d="M5 23v-7q0-1 1-1h12q1 0 1 1v7z"/><path fill="#2aa0ee" d="M5 16h14v3H5z"/></svg></div>
    <div class="a run"><svg viewBox="0 0 24 24"><path fill="#fff" d="M12 0a12 12 0 1 1-6 22l-6 2 2-6A12 12 0 0 1 12 0z"/><circle cx="12" cy="12" r="10" fill="#2bb741"/><path fill="#fff" d="M8 6h2l1 4-1 1q1 3 4 4l2-2 3 2q0 4-4 3Q8 17 6 9q0-2 2-3z"/></svg></div>
    <div class="a"><svg viewBox="0 0 24 24"><path fill="none" stroke="#8a56c9" stroke-width="4" d="M2 6v12L18 3M2 6l16 15"/><path fill="#b48aed" d="M17 0l7 3v18l-7 3z"/></svg></div>
    <div class="a"><svg viewBox="0 0 24 24"><path fill="#4c5151" d="M3 4l13 1 5 8-5 7-9-5z"/><path fill="#111" d="M8 9l7-2 4 6-4 6-6-4z"/><path fill="#21d321" d="M10 10l5-1 2 4-3 4-5-3z"/></svg></div>
    <div class="a"><svg viewBox="0 0 24 24"><path fill="#d83b01" d="M4 5L14 0l6 3v18l-6 3-9-4 9 1V5L9 7v9l-5 2z"/><path fill="#f0501c" d="M14 0l6 3v18l-6 3z"/></svg></div>
    <div class="a"><svg viewBox="0 0 24 24"><path fill="none" stroke="#35a5e8" stroke-width="2" d="M7 6V1h10v5"/><path fill="#f5f5f5" d="M1 5h22v17q0 2-2 2H3q-2 0-2-2z"/><path fill="#f25022" d="M7 10h4v4H7z"/><path fill="#7fba00" d="M13 10h4v4h-4z"/><path fill="#00a4ef" d="M7 16h4v4H7z"/><path fill="#ffb900" d="M13 16h4v4h-4z"/></svg></div>
    <div class="a"><svg viewBox="0 0 24 24"><path fill="none" stroke="#1583c9" stroke-width="4" d="M2 7l16 14M2 17L18 3"/><path fill="#29a8f2" d="M17 0l7 3v18l-7 3z"/></svg></div>
    <div class="a"><svg viewBox="0 0 24 24"><circle cx="12" cy="12" r="12" fill="#1ed760"/><path fill="none" stroke="#10271a" stroke-width="2.200" stroke-linecap="round" d="M4.500 8.500q8-3 15 1M5.500 12.500q7-2 12.500 1M6.500 16q6-1.500 10 1"/></svg></div>
    <div class="a"><svg viewBox="0 0 24 24"><circle cx="12" cy="12" r="12" fill="#1a86d8"/><path fill="#48d0a5" d="M5 3q9-6 16 1 5 7 2 11-6 2-8-1 2-5-2-8-3-2-8-3z"/><path fill="#0d4f9e" d="M9 10q-3 6 4 11 4 1 8-3-3 6-10 6Q4 22 6 14q1-3 3-4z"/></svg></div>
    <div class="a run"><svg viewBox="0 0 24 24"><circle cx="12" cy="13" r="11" fill="#2fa34f"/><path fill="#e33e30" d="M2 8a11 11 0 0 1 20 0H12z"/><path fill="#fbc216" d="M23 9a11 11 0 0 1-11 15l5-9-1-6z"/><circle cx="12" cy="13" r="5" fill="#3b7ded" stroke="#fff" stroke-width="1.500"/></svg><svg class="ava" viewBox="0 0 16 16"><circle cx="8" cy="8" r="8" fill="#bcd6e6"/><path fill="#262329" d="M4 3q5-4 8 1v11H5l-2-5z"/><path fill="#e0b49a" d="M6 5h3l-1 6-2-1z"/></svg></div>
    <div class="a run"><svg viewBox="0 0 24 24"><path fill="#1f7fd6" d="M1 2h16v16H1z"/><path fill="#0c5aa8" d="M5 18h12v6H5z"/><path fill="#3fb5f5" d="M4 8h14v10H4z"/></svg><span class="badge">29</span></div>
    <div class="a run"><svg viewBox="0 0 24 24"><path fill="#c42c49" d="M0 0h24v7H0z"/><path fill="#4a56b8" d="M0 8h24v7H0z"/><path fill="#3b8a3f" d="M0 16h24v7H0z"/><path fill="#e9a63a" d="M8 0h8v24H8z"/><path fill="#fff" d="M9 8h6v8H9z"/><path fill="#9b5a14" d="M10 6h4v10h-4z"/></svg></div>
    <div class="a run sel"><svg viewBox="0 0 24 24"><path fill="#f7efe9" d="M0 0h24v24H0z"/><path fill="#c8262c" fill-rule="evenodd" d="M9 2h6l5 19h-5l-1-4-4 1-1 3H4zM12 7l-2 8 4-1z"/></svg></div>
  </div>
  <div class="tray">
    <svg class="up" viewBox="0 0 14 8"><path fill="none" stroke="#e8e8e8" stroke-width="1.500" d="M1 7l6-6 6 6"/></svg>
    <svg class="cl" viewBox="0 0 18 14"><path fill="#bbb" d="M3 11Q-1 9 1 6q2-2 3-2 3-5 8-2 3 4 2 9z"/><circle cx="13" cy="9.500" r="4.500" fill="#d83240"/><path stroke="#fff" stroke-width="1.300" d="M11.500 8l3 3M14.500 8l-3 3"/></svg>
    <span class="tur">TUR</span>
    <svg class="wf" viewBox="0 0 18 14"><g fill="none" stroke="#e8e8e8" stroke-width="1.400"><path d="M1 5q8-7 16 0M3.500 8q5.500-5 11 0M6 10.500q3-3 6 0"/></g><circle cx="9" cy="12.500" r="1.300" fill="#e8e8e8"/></svg>
    <svg class="sp" viewBox="0 0 18 14"><path fill="none" stroke="#e8e8e8" stroke-width="1.300" d="M1 5h3l4-4v12L4 9H1zM10 5q1.500 2 0 4M12.500 3q3 4 0 8M15 1q4 6 0 12"/></svg>
    <svg class="ba" viewBox="0 0 18 14"><path fill="#e8e8e8" d="M7 4h8v7H5V9z"/><path fill="none" stroke="#e8e8e8" stroke-width="1.300" d="M6 2.500h10v10H4V8M17.500 6v3"/><path fill="#e8e8e8" d="M0 2h7v4L5 7v2H2V7L0 6zM1 0h1.500v2H1zM4 0h1.500v2H4z"/></svg>
    <div class="clock">05:33<br>9.06.2022</div>
    <span class="cnt">20</span>
  </div>
</div>
</body>
</html>
```
FILE: styles.css
```css
* { box-sizing: border-box; }
body {
  margin: 0; width: 1920px; height: 1080px; overflow: hidden;
  display: flex; flex-direction: column;
  background: #03031c; color: #f0f0f0;
  font: 12px/16px "Open Sans", "Noto Sans", sans-serif;
}
svg { display: block; flex: none; }
i, em { font-style: normal; }
.defs { width: 0; height: 0; position: absolute; }
.window {
  margin: 2px 2px 0; height: 1030px; flex: none;
  border: 1px solid #0c87ce; background: #222831;
  display: flex; flex-direction: column;
}
.i16 { width: 16px; height: 16px; }
.i12 { width: 12px; height: 16px; }
.i8 { width: 8px; height: 8px; }
.car, .dn { display: block; flex: none; width: 0; height: 0; border: solid transparent; border-bottom: 0; border-top-color: #d9d9d9; }
.car { border-width: 3.500px 2.500px 0; }
.dn { border-width: 4px 4px 0; }

/* title bar and menu tabs */
.head { height: 48px; display: grid; grid-template: 30px 18px / 49px 1fr; }
.logo { grid-row: 1 / 3; width: 26px; height: 30px; margin: 8px 0 0 11px; }
.titlebar { display: flex; align-items: center; height: 29px; }
.quick { width: 630px; display: flex; align-items: center; gap: 8px; padding-left: 4px; }
.quick .i12 { margin: 0 2px 0 2px; }
.quick .c2, .quick .c1 { margin: 0 0 0 -1px; }
.quick .c3 { margin-left: 5px; }
.doc { display: flex; gap: 12px; white-space: pre; letter-spacing: -.34px; width: 702px; padding-bottom: 3px; }
.info { display: flex; align-items: center; }
.tri { width: 4px; height: 8px; margin-right: 6px; }
.search { width: 178px; height: 20px; background: #4a5263; color: #c3c7ce; font-style: italic; padding-left: 3px; line-height: 18px; letter-spacing: -.25px; }
.mg { margin-left: 5px; }
.usr { margin-left: 8px; }
.user { width: 73px; margin-left: 5px; letter-spacing: -.25px; }
.k1 { margin-left: 12px; }
.crt { margin-left: 12px; }
.aa { margin-left: 7px; }
.k2 { margin-left: 5px; }
.bar { width: 1px; height: 18px; background: #46536a; margin: 0 9px 0 10px; }
.k3 { margin-left: 7px; }
.q { font: bold 12px "Open Sans", sans-serif; fill: #444; }
.win { width: 60px; height: 14px; margin: 0 0 2px 30px; }
.menu { display: flex; align-items: center; letter-spacing: -.36px; color: #b3b7bd; }
.menu a { padding: 0 10px; height: 18px; line-height: 16px; white-space: nowrap; }
.menu .on { background: #3b4453; color: #f0f0f0; width: 51px; padding-left: 9px; }
.mini { width: 26px; height: 8px; margin-left: 21px; }

/* ribbon */
.ribbon { margin: 0 4px 0 5px; height: 97px; flex: none; display: grid; grid-template-columns: 223px 249px 188px 272px 160px 264px 68px 96px 79px 1fr; gap: 1px; letter-spacing: -.32px; }
.panel { background: #3b4453; display: flex; flex-direction: column; min-width: 0; }
.body { display: flex; height: 80px; }
.name { display: flex; align-items: center; justify-content: center; gap: 6px; height: 16px; }
.big { display: flex; flex-direction: column; align-items: center; padding-top: 7px; flex: none; }
.big svg { width: 32px; height: 32px; }
.big span { margin-top: 4px; line-height: 15px; text-align: center; }
.big .car { margin-top: 2px; }
.w42 { width: 42px; } .w44 { width: 44px; } .w55 { width: 55px; } .w38 { width: 38px; }
.w47 { width: 47px; } .w58 { width: 58px; } .w63 { width: 62px; } .w43 { width: 42px; }
.w62 { width: 62px; } .w42g { width: 42px; } .w72 { width: 72px; } .w54 { width: 54px; }
.ins { padding-top: 5px; }
.base { padding-top: 11px; }
.col { display: flex; flex-direction: column; padding-top: 4px; flex: none; }
.t { height: 24px; display: flex; align-items: center; white-space: nowrap; }
.t > svg { margin-right: 5px; }
.dcol { margin-left: 6px; }
.draw .name { padding-left: 2px; }
.m1 { width: 72px; margin-left: 7px; }
.m2 { width: 69px; }
.m3 { width: 75px; }
.tr { margin-left: 12px; } .fi { margin-left: 14px; } .ar2 { margin-left: 9px; }
.li { margin-left: 9px; } .le { margin-left: 8px; }
.an1 { margin-left: 8px; }
.lcol { padding-top: 5px; }
.combo { height: 22px; width: 181px; background: #4b566a; border: 1px solid #272c38; display: flex; align-items: center; padding: 0 2px 0 3px; }
.combo .dn { margin-left: auto; }
.combo.wide { width: 208px; padding-left: 6px; margin-bottom: 1px; }
.wide .lk { margin: 0 5px 0 5px; }
.sw { width: 14px; height: 14px; background: #ff0; border: 1px solid #000; margin-right: 5px; }
.sw.y { margin: 0 11px 0 9px; width: 16px; height: 16px; border: 1px solid #9aa0aa; }
.ln { width: 64px; height: 1px; background: #eee; margin-right: 2px; }
.ln.thick { height: 4px; }
.icons { padding-left: 4px; }
.icons > svg { margin-right: 8px; }
.icons > svg:nth-of-type(5) { margin-right: 5px; }
.bl { margin-left: 3px; }
.ea { margin-left: 10px; }
.pi { margin-left: 2px; }
.pi .t { height: 23.500px; }
.pi .t > svg { margin-right: 2px; }
.pcombos { padding-top: 5px; display: flex; flex-direction: column; gap: 2px; }
.pcombos .combo + .combo { height: 23px; margin-top: -1px; }
.props .name { position: relative; padding-right: 60px; margin-left: 52px; }
.la { width: 6px; height: 6px; }
.props .la { position: absolute; right: 5px; top: 6px; }
.groups .big { padding-left: 1px; }
.gi { width: 24px; }
.gi .t { justify-content: center; }
.gi .t > svg { margin: 0; }
.hot { background: #44617f; outline: 1px solid #7cc0f4; outline-offset: -1px; }
.uc { margin-left: 2px; }
.ci { margin-left: 3px; }
.view .name { justify-content: flex-start; padding-left: 5px; }

/* drawing tabs */
.files { height: 31px; margin: 0 3px; flex: none; padding: 5px 0 0 16px; display: flex; border-bottom: 4px solid #3b4453; letter-spacing: -.3px; }
.ft { height: 22px; display: flex; align-items: center; border-radius: 8px 8px 0 0; background: #2d3441; color: #b8bcc2; padding-top: 2px; }
.start { width: 127px; padding-left: 15px; }
.cur { width: 202px; background: #3b4453; color: #f0f0f0; padding-left: 12px; white-space: nowrap; gap: 8px; border-radius: 9px 9px 0 0; }
.ft svg { width: 8px; height: 8px; }
.ft.add { width: 22px; margin-left: 6px; margin-top: 5px; height: 14px; justify-content: center; padding-top: 1px; }

/* model space */
.canvas { width: 1908px; height: 820px; margin: 0 3px; }
.canvas text { white-space: pre; }
.ui { font: 12px "Open Sans", sans-serif; fill: #e8e8e8; }
.teal { font-family: "Liberation Sans", sans-serif; fill: #005f80; }
.tiny { font: 6px "Liberation Sans", sans-serif; fill: #0ff; stroke: #0ff; stroke-width: .35; }
.lab { font: bold 7px "Liberation Sans", sans-serif; fill: #0ff; stroke: #0ff; stroke-width: .7; }
.serif { font-family: "Liberation Serif", serif; }
.sans { font-family: "Liberation Sans", sans-serif; }
.cy { font: 15.500px "Liberation Sans", sans-serif; fill: #0ff; }
.cad { font-family: Roboto, sans-serif; font-weight: 300; font-size: 16px; fill: #e6e600; }
.kp { font: italic 13.500px "Open Sans", sans-serif; fill: #ff0; }
.ar { font: 17px "Liberation Sans", sans-serif; fill: #f8f800; }
.legend { font: italic 11px "Liberation Serif", serif; fill: #0f0; stroke: #0f0; stroke-width: .2; }
.akim { font: bold 14px "Liberation Sans", sans-serif; fill: #fff; }
.faz { font: bold 17px "Liberation Sans", sans-serif; fill: #000; }
.yak { font: bold 8.500px "Liberation Sans", sans-serif; fill: #e0102c; }
.tab { font: 9.500px "Liberation Sans", sans-serif; fill: #1b2a44; }
.cube { font: bold 21px "Liberation Sans", sans-serif; fill: #b3b5b8; text-anchor: middle; }
.cube .top { font-size: 14px; fill: #50565c; }
.wcs { font: 11px "Liberation Sans", sans-serif; fill: #4d515b; }

/* layout tabs and status bar */
.bottom { height: 32px; border-top: 1px solid #474a4e; margin: 0 3px; display: flex; justify-content: space-between; }
.layouts { display: flex; padding-left: 12px; gap: 3px; letter-spacing: -.15px; }
.layouts a { height: 17px; width: 62px; text-align: center; background: #2d3441; color: #a9adb4; border-radius: 0 0 8px 8px; }
.layouts .on { background: #3b4453; color: #fff; font-weight: bold; width: 57px; letter-spacing: -.4px; }
.layouts .plus { width: 22px; display: flex; align-items: center; justify-content: center; margin-left: 2px; height: 15px; }
.plus svg { width: 8px; height: 8px; }
.status { display: flex; gap: 3px; padding: 1px 2px 0 0; }
.g { height: 24px; background: #343c4a; display: flex; align-items: center; }
.model { width: 47px; justify-content: center; letter-spacing: -.4px; }
.s { width: 24px; height: 22px; display: flex; align-items: center; justify-content: center; }
.g svg { width: 16px; height: 16px; }
.g .big18 { width: 18px; height: 18px; }
.act { background: #5c8ac0; border-right: 1px solid #343c4a; border-left: 1px solid #343c4a; }
.g .dn { margin: 0 4px 0 5px; }
.an em { width: 21px; text-align: center; letter-spacing: -.4px; }
.an .dn { margin: 0 4px 0 1px; }
.gear { width: 39px; padding-left: 4px; gap: 3px; }
.one { width: 24px; justify-content: center; }
.two { width: 22px; justify-content: center; }
.last { width: 48px; justify-content: center; gap: 8px; }
.g .fs { width: 17px; height: 13px; }

/* taskbar */
.taskbar {
  height: 48px; display: flex;
  background: linear-gradient(90deg, #221a2d 0, #261b33 430px, #33182f 620px, #32192f 700px, #33221f 850px, #3b1f1d 1000px, #451318 1200px, #4b1115 1380px, #401613 1560px, #31191a 1740px, #2b1a1c 1920px);
}
.weather { width: 588px; display: flex; align-items: center; gap: 9px; padding-left: 31px; letter-spacing: -.3px; }
.weather svg { width: 20px; height: 20px; }
.weather span { color: #c8c4cc; }
.apps { display: flex; gap: 4.050px; padding-top: 4px; }
.a { width: 40px; height: 40px; display: flex; align-items: center; justify-content: center; position: relative; border-radius: 4px; }
.a svg { width: 24px; height: 24px; }
.a .ava { position: absolute; width: 16px; height: 16px; right: 1px; top: 3px; }
.run::after { content: ""; position: absolute; bottom: 1px; left: 17px; width: 6px; height: 3px; border-radius: 2px; background: #a79a9d; }
.sel { background: #ffffff14; outline: 1px solid #ffffff12; }
.sel::after { left: 12px; width: 16px; background: #d898e0; }
.badge { position: absolute; left: 19px; top: 3px; width: 21px; height: 17px; border-radius: 9px; background: #d99ae0; color: #221; text-align: center; line-height: 17px; letter-spacing: -.5px; }
.tray { margin-left: auto; display: flex; align-items: center; padding-right: 17px; }
.up { width: 14px; height: 8px; }
.cl { width: 18px; height: 14px; margin-left: 9px; }
.tur { margin-left: 14px; width: 24px; letter-spacing: -.2px; }
.wf { width: 18px; height: 14px; margin-left: 15px; }
.sp { width: 18px; height: 14px; margin-left: 7px; }
.ba { width: 18px; height: 14px; margin-left: 6px; }
.clock { width: 64px; text-align: right; letter-spacing: -.25px; }
.cnt { width: 21px; height: 20px; margin-left: 6px; border-radius: 50%; background: #d99ae0; color: #221; text-align: center; line-height: 20px; letter-spacing: -.5px; }
```
